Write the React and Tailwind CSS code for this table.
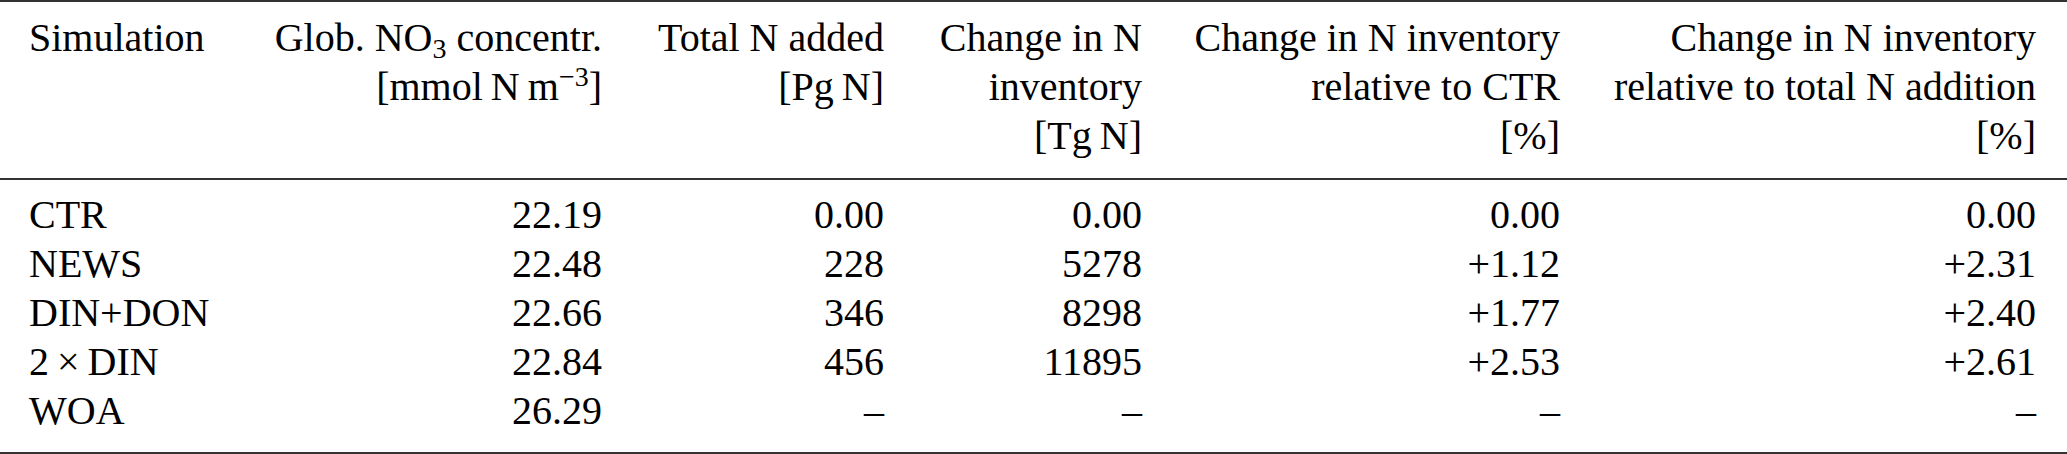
const GRID = 'grid grid-cols-[185px_388px_282px_258px_418px_476px] pl-[29px] pr-[31px]';

const rows = [
  ['CTR', '22.19', '0.00', '0.00', '0.00', '0.00'],
  ['NEWS', '22.48', '228', '5278', '+1.12', '+2.31'],
  ['DIN+DON', '22.66', '346', '8298', '+1.77', '+2.40'],
  ['2\u2009×\u2009DIN', '22.84', '456', '11895', '+2.53', '+2.61'],
  ['WOA', '26.29', '–', '–', '–', '–'],
];

const Rule = () => <div className="h-[2px] bg-[#333]" />;

export default function App() {
  return (
    <div className="w-[2067px] h-[454px] overflow-hidden bg-white text-black font-['Liberation_Serif','Times_New_Roman',serif] text-[40px] leading-[49px]">
      <Rule />
      <div className={`${GRID} pt-[11px] pb-[18px]`}>
        <div className="whitespace-nowrap">Simulation</div>
        <div className="text-right whitespace-nowrap">
          <div>
            Glob. NO<sub className="text-[28px]">3</sub> concentr.
          </div>
          <div>
            [mmol{'\u2009'}N{'\u2009'}m<sup className="text-[28px]">−3</sup>]
          </div>
        </div>
        <div className="text-right whitespace-nowrap">
          <div>Total N added</div>
          <div>[Pg{'\u2009'}N]</div>
        </div>
        <div className="text-right whitespace-nowrap">
          <div>Change in N</div>
          <div>inventory</div>
          <div>[Tg{'\u2009'}N]</div>
        </div>
        <div className="text-right whitespace-nowrap">
          <div>Change in N inventory</div>
          <div>relative to CTR</div>
          <div>[%]</div>
        </div>
        <div className="text-right whitespace-nowrap">
          <div>Change in N inventory</div>
          <div>relative to total N addition</div>
          <div>[%]</div>
        </div>
      </div>
      <Rule />
      <div className={`${GRID} pt-[10px] pb-[17px]`}>
        {rows.map((r) =>
          r.map((cell, i) => (
            <div key={r[0] + i} className={i === 0 ? 'whitespace-nowrap' : 'text-right whitespace-nowrap'}>
              {cell}
            </div>
          ))
        )}
      </div>
      <Rule />
    </div>
  );
}
